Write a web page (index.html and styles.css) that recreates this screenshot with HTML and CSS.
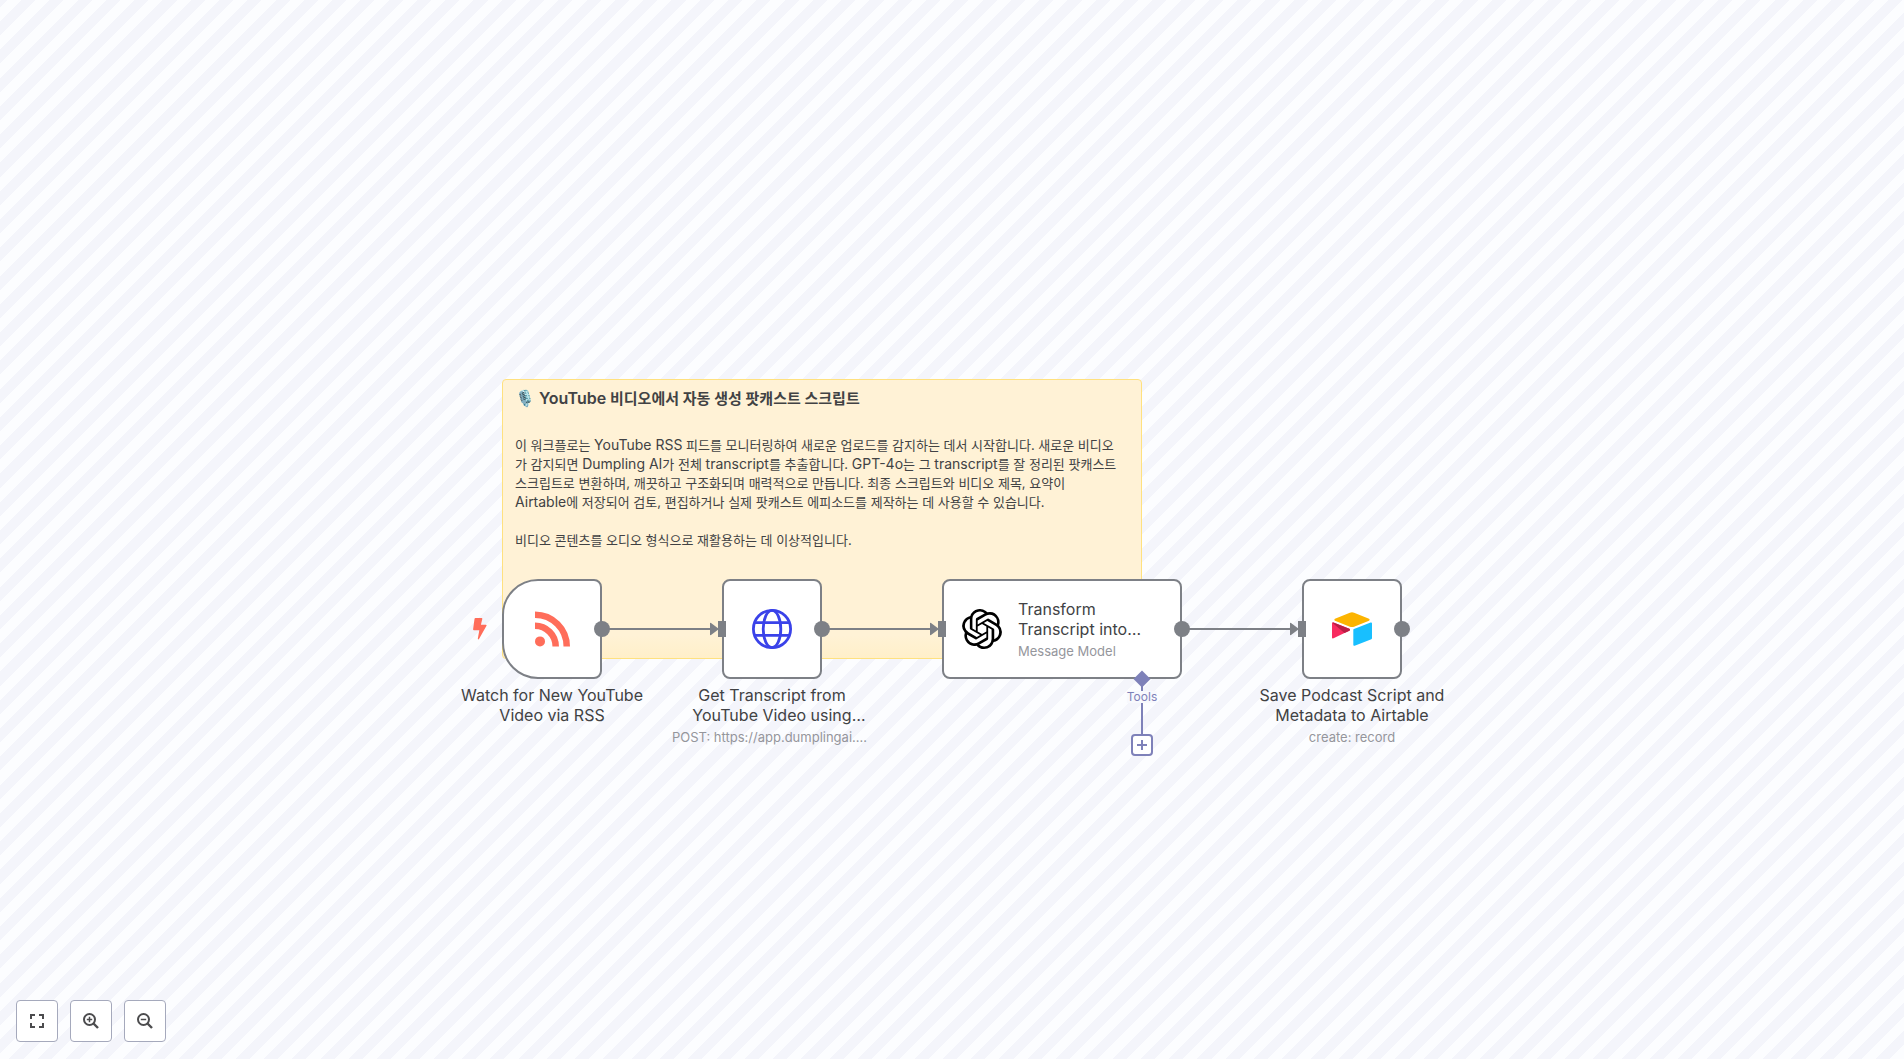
FILE: index.html
```html
<!DOCTYPE html>
<html lang="ko">
<head>
<meta charset="utf-8">
<title>Workflow</title>
<link rel="stylesheet" href="styles.css">
</head>
<body>
<main class="canvas">
  <div class="world">
    <article class="sticky">
      <h1 class="sticky-title"><span class="latin">🎙️ YouTube</span> 비디오에서 자동 생성 팟캐스트 스크립트</h1>
      <p class="sticky-text">이 워크플로는 <span class="latin">YouTube RSS</span> 피드를 모니터링하여 새로운 업로드를 감지하는 데서 시작합니다. 새로운 비디오<br>가 감지되면 <span class="latin">Dumpling AI</span>가 전체 <span class="latin">transcript</span>를 추출합니다. <span class="latin">GPT-4o</span>는 그 <span class="latin">transcript</span>를 잘 정리된 팟캐스트<br>스크립트로 변환하며, 깨끗하고 구조화되며 매력적으로 만듭니다. 최종 스크립트와 비디오 제목, 요약이<br><span class="latin">Airtable</span>에 저장되어 검토, 편집하거나 실제 팟캐스트 에피소드를 제작하는 데 사용할 수 있습니다.</p>
      <p class="sticky-text">비디오 콘텐츠를 오디오 형식으로 재활용하는 데 이상적입니다.</p>
    </article>

    <svg class="edges" width="900" height="400" aria-hidden="true">
      <path class="edge" d="M100 250H210M320 250H430M620 250H790"/>
      <path class="edge-head" d="M208 244.500Q208 243.500 209 244L217 250L209 256Q208 256.500 208 255.500ZM428 244.500Q428 243.500 429 244L437 250L429 256Q428 256.500 428 255.500ZM788 244.500Q788 243.500 789 244L797 250L789 256Q788 256.500 788 255.500Z"/>
      <path class="edge-tool" d="M640 300V356"/>
    </svg>

    <section class="node node-rss">
      <div class="box box-trigger">
        <svg class="bolt" viewBox="0 0 14 22"><path d="M2.500 0H8.600Q9.500 0 9.300 .9L7.900 6.700H12.800Q14 6.700 13.500 7.800L6 21Q5.600 21.600 5 21.300L4.800 20.800L6.300 12.200H1Q0 12.200 .1 11.200L1.500 .9Q1.600 0 2.500 0Z"/></svg>
        <svg class="icon" viewBox="0 0 40 40"><g fill="none" stroke="#ff6d5a" stroke-width="6.500"><path d="M3 5.750A31.750 31.750 0 0 1 34.750 37.500"/><path d="M3 16.800A20.700 20.700 0 0 1 23.700 37.500"/></g><circle cx="8" cy="32.400" r="5" fill="#ff6d5a"/></svg>
        <i class="dot"></i>
      </div>
      <h2 class="name">Watch for New YouTube Video via RSS</h2>
    </section>

    <section class="node node-http">
      <div class="box">
        <i class="port"></i>
        <svg class="icon" viewBox="0 0 40 40"><g fill="none" stroke="#3a42e9" stroke-width="2.800"><circle cx="20" cy="20" r="18.600"/><ellipse cx="20" cy="20" rx="8.800" ry="18.600"/><path d="M2.500 13.700H37.500M2.500 26.300H37.500"/></g></svg>
        <i class="dot"></i>
      </div>
      <h2 class="name">Get Transcript from YouTube Video using Dumpling AI</h2>
      <p class="sub">POST: https://app.dumplingai.com/api/v1/get-youtube-transcript</p>
    </section>

    <section class="node node-ai">
      <div class="box box-wide">
        <i class="port"></i>
        <svg class="icon" viewBox="0 0 24 24"><path d="M22.2819 9.8211a5.9847 5.9847 0 0 0-.5157-4.9108 6.0462 6.0462 0 0 0-6.5098-2.9A6.0651 6.0651 0 0 0 4.9807 4.1818a5.9847 5.9847 0 0 0-3.9977 2.9 6.0462 6.0462 0 0 0 .7427 7.0966 5.98 5.98 0 0 0 .511 4.9107 6.051 6.051 0 0 0 6.5146 2.9001A5.9847 5.9847 0 0 0 13.2599 24a6.0557 6.0557 0 0 0 5.7718-4.2058 5.9894 5.9894 0 0 0 3.9977-2.9001 6.0557 6.0557 0 0 0-.7475-7.0729zm-9.022 12.6081a4.4755 4.4755 0 0 1-2.8764-1.0408l.1419-.0804 4.7783-2.7582a.7948.7948 0 0 0 .3927-.6813v-6.7369l2.02 1.1686a.071.071 0 0 1 .038.052v5.5826a4.504 4.504 0 0 1-4.4945 4.4944zm-9.6607-4.1254a4.4708 4.4708 0 0 1-.5346-3.0137l.142.0852 4.783 2.7582a.7712.7712 0 0 0 .7806 0l5.8428-3.3685v2.3324a.0804.0804 0 0 1-.0332.0615L9.74 19.9502a4.4992 4.4992 0 0 1-6.1408-1.6464zM2.3408 7.8956a4.485 4.485 0 0 1 2.3655-1.9728V11.6a.7664.7664 0 0 0 .3879.6765l5.8144 3.3543-2.0201 1.1685a.0757.0757 0 0 1-.071 0l-4.8303-2.7865A4.504 4.504 0 0 1 2.3408 7.872zm16.5963 3.8558L13.1038 8.364 15.1192 7.2a.0757.0757 0 0 1 .071 0l4.8303 2.7913a4.4944 4.4944 0 0 1-.6765 8.1042v-5.6772a.79.79 0 0 0-.407-.667zm2.0107-3.0231l-.142-.0852-4.7735-2.7818a.7759.7759 0 0 0-.7854 0L9.409 9.2297V6.8974a.0662.0662 0 0 1 .0284-.0615l4.8303-2.7866a4.4992 4.4992 0 0 1 6.6802 4.66zM8.3065 12.863l-2.02-1.1638a.0804.0804 0 0 1-.038-.0567V6.0742a4.4992 4.4992 0 0 1 7.3757-3.4537l-.142.0805L8.704 5.459a.7948.7948 0 0 0-.3927.6813zm1.0976-2.3654l2.602-1.4998 2.6069 1.4998v2.9994l-2.5974 1.4997-2.6067-1.4997Z"/></svg>
        <div class="inner">
          <h2 class="name">Transform Transcript into Podcast Script</h2>
          <p class="sub">Message Model</p>
        </div>
        <i class="dot"></i>
        <i class="diamond"></i>
      </div>
      <span class="tools">Tools</span>
      <button class="add" aria-label="Add tool"><svg viewBox="0 0 12 12"><path d="M6 1V11M1 6H11"/></svg></button>
    </section>

    <section class="node node-airtable">
      <div class="box">
        <i class="port"></i>
        <svg class="icon" viewBox="11 -4 177 177"><path fill="#fcb400" d="M90.039 12.367 24.079 39.66c-3.667 1.519-3.630 6.729.062 8.192l66.235 26.266a24.580 24.580 0 0 0 18.120 0l66.236-26.266c3.690-1.463 3.729-6.673.062-8.192l-65.960-27.293a24.580 24.580 0 0 0-18.795 0"/><path fill="#18bfff" d="M105.312 88.460v65.617c0 3.120 3.147 5.258 6.048 4.108l73.806-28.648a4.420 4.420 0 0 0 2.790-4.108V59.813c0-3.121-3.147-5.258-6.048-4.108l-73.806 28.648a4.420 4.420 0 0 0-2.790 4.108"/><path fill="#f82b60" d="m88.078 91.846-21.904 10.576-2.224 1.075-46.238 22.155c-2.930 1.414-6.672-.722-6.672-3.978V60.088c0-1.178.604-2.195 1.414-2.960a5.024 5.024 0 0 1 1.120-.840c1.104-.663 2.680-.840 4.020-.310L87.710 83.760c3.564 1.414 3.844 6.408.368 8.087"/><path fill="#ba1e45" d="m88.078 91.846-21.904 10.576-53.720-45.295a5.024 5.024 0 0 1 1.120-.839c1.104-.663 2.680-.840 4.020-.310L87.710 83.760c3.564 1.414 3.844 6.408.368 8.087"/></svg>
        <i class="dot"></i>
      </div>
      <h2 class="name">Save Podcast Script and Metadata to Airtable</h2>
      <p class="sub">create: record</p>
    </section>
  </div>

  <nav class="controls" aria-label="Zoom">
    <button class="control" aria-label="Fit to view"><svg viewBox="0 0 16 16"><path stroke-width="2" d="M2 6V2H6M10 2H14V6M14 10V14H10M6 14H2V10"/></svg></button>
    <button class="control" aria-label="Zoom in"><svg viewBox="0 0 16 16"><circle cx="6.500" cy="6.500" r="5.500" stroke-width="2"/><path stroke-width="2.400" d="M10.500 10.500L15 15"/><path stroke-width="1.500" d="M6.500 3.800V9.200M3.800 6.500H9.200"/></svg></button>
    <button class="control" aria-label="Zoom out"><svg viewBox="0 0 16 16"><circle cx="6.500" cy="6.500" r="5.500" stroke-width="2"/><path stroke-width="2.400" d="M10.500 10.500L15 15"/><path stroke-width="1.500" d="M3.800 6.500H9.200"/></svg></button>
  </nav>
</main>
</body>
</html>
```
FILE: styles.css
```css
* { box-sizing: border-box; }

body {
  margin: 0;
  font-family: Inter, "Noto Sans CJK KR", sans-serif;
  color: #414244;
}

h1, h2, p { margin: 0; }
button { padding: 0; font: inherit; }

.canvas {
  position: relative;
  display: grid;
  place-items: center;
  min-height: 100vh;
  overflow: hidden;
  background: repeating-linear-gradient(-45deg, #fcfdff 0 10px, #f4f5fb 10px 20px);
}

/* Nodes sit on a free canvas, placed by their own coordinates */
.world {
  position: relative;
  width: 900px;
  height: 301px;
}

.sticky {
  position: absolute;
  left: 0;
  top: 0;
  width: 640px;
  height: 280px;
  padding: 8px 12px;
  border: 1px solid #ffe17f;
  border-radius: 4px;
  background: linear-gradient(#fff2d6 0, #fff2d6 255px, #ffefc8 280px);
}

.sticky-title {
  margin-bottom: 27px;
  font-size: 15px;
  font-weight: 600;
  line-height: 20px;
}

.sticky-title .latin { font-size: 16px; }

/* Hangul is set one size below the Latin words so that both look equally tall */
.sticky-text {
  margin-bottom: 19px;
  font-size: 13px;
  line-height: 19px;
  white-space: nowrap;
}

.sticky-text .latin { font-size: 14px; line-height: 18px; }

.edges {
  position: absolute;
  left: 0;
  top: 0;
}

.edge { stroke: #7d8086; stroke-width: 2; }
.edge-head { fill: #7d8086; }
.edge-tool { stroke: #7e81b9; stroke-width: 2; }

.node { position: absolute; top: 200px; text-align: center; }
.node-rss { left: -50px; width: 200px; }
.node-http { left: 170px; width: 200px; }
.node-ai { left: 440px; width: 240px; }
.node-airtable { left: 750px; width: 200px; }

.box {
  position: relative;
  display: flex;
  align-items: center;
  justify-content: center;
  width: 100px;
  height: 100px;
  margin: 0 auto 6px;
  border: 2px solid #7d8086;
  border-radius: 8px;
  background: #fff;
}

.box-trigger { border-radius: 36px 8px 8px 36px; }

.box-wide {
  width: 240px;
  justify-content: flex-start;
  gap: 16px;
  padding: 0 18px;
  text-align: left;
}

.icon { flex: none; width: 40px; height: 40px; }
.inner { flex: 1; min-width: 0; }

.bolt {
  position: absolute;
  left: -31px;
  top: 37px;
  width: 14px;
  height: 22px;
  fill: #ff6d5a;
}

.dot {
  position: absolute;
  right: -10px;
  top: 40px;
  width: 16px;
  height: 16px;
  border-radius: 50%;
  background: #7d8086;
}

.port {
  position: absolute;
  left: -6px;
  top: 40px;
  width: 8px;
  height: 16px;
  background: #7d8086;
}

.diamond {
  position: absolute;
  left: 192px;
  bottom: -8px;
  width: 12px;
  height: 12px;
  background: #7e81b9;
  transform: rotate(45deg);
}

.name {
  display: -webkit-box;
  -webkit-box-orient: vertical;
  -webkit-line-clamp: 2;
  overflow: hidden;
  font-size: 16px;
  font-weight: 400;
  line-height: 20px;
}

.sub {
  margin-top: 4px;
  overflow: hidden;
  font-size: 13px;
  line-height: 16px;
  white-space: nowrap;
  text-overflow: ellipsis;
  color: #95969c;
}

.tools {
  position: absolute;
  left: 200px;
  top: 112px;
  transform: translateX(-50%);
  background: #f8f9fd;
  font-size: 12px;
  line-height: 12px;
  color: #7e81b9;
}

.add {
  position: absolute;
  left: 189px;
  top: 155px;
  display: grid;
  place-items: center;
  width: 22px;
  height: 22px;
  border: 2px solid #7e81b9;
  border-radius: 4px;
  background: #fff;
}

.add svg { width: 12px; height: 12px; stroke: #7e81b9; stroke-width: 2; }

.controls {
  position: absolute;
  left: 16px;
  bottom: 17px;
  display: flex;
  gap: 12px;
}

.control {
  display: grid;
  place-items: center;
  width: 42px;
  height: 42px;
  border: 1px solid #a5a9bc;
  border-radius: 4px;
  background: #fff;
}

.control svg { width: 16px; height: 16px; fill: none; stroke: #4c4c4e; }
```
